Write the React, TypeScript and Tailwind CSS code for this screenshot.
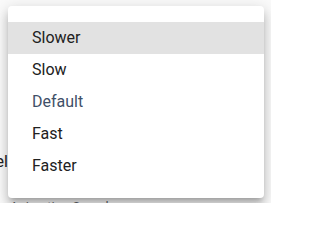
const speeds = ["Slower", "Slow", "Default", "Fast", "Faster"];

function SpeedMenu() {
    return (
        <div className="absolute left-2 top-1.5 w-[256px] rounded bg-white py-4 shadow-[0_5px_5px_-3px_rgba(0,0,0,0.2),0_8px_10px_1px_rgba(0,0,0,0.14),0_3px_14px_2px_rgba(0,0,0,0.12)]">
            {speeds.map((s, i) => (
                <div
                    key={s}
                    className={
                        "flex h-8 items-center px-6 text-[16px] " +
                        (i === 0 ? "bg-[#e2e2e2] " : "") +
                        (s === "Default" ? "text-[#3f5068]" : "text-[#212121]")
                    }
                >
                    {s}
                </div>
            ))}
        </div>
    );
}

export default function App() {
    return (
        <div className="relative h-[203px] w-[271px] overflow-hidden bg-[#fafafa] font-['Roboto',sans-serif]">
            <div className="flex flex-col pt-[152px]">
                <div className="flex h-5 w-[8px] justify-end overflow-hidden whitespace-nowrap text-[16px] leading-5 text-[#212121]">
                    Level
                </div>
                <div className="mt-[27px] pl-[10px] text-[13px] leading-4 text-[#5f6368]">
                    Animation Speed
                </div>
            </div>
            <SpeedMenu />
        </div>
    );
}
